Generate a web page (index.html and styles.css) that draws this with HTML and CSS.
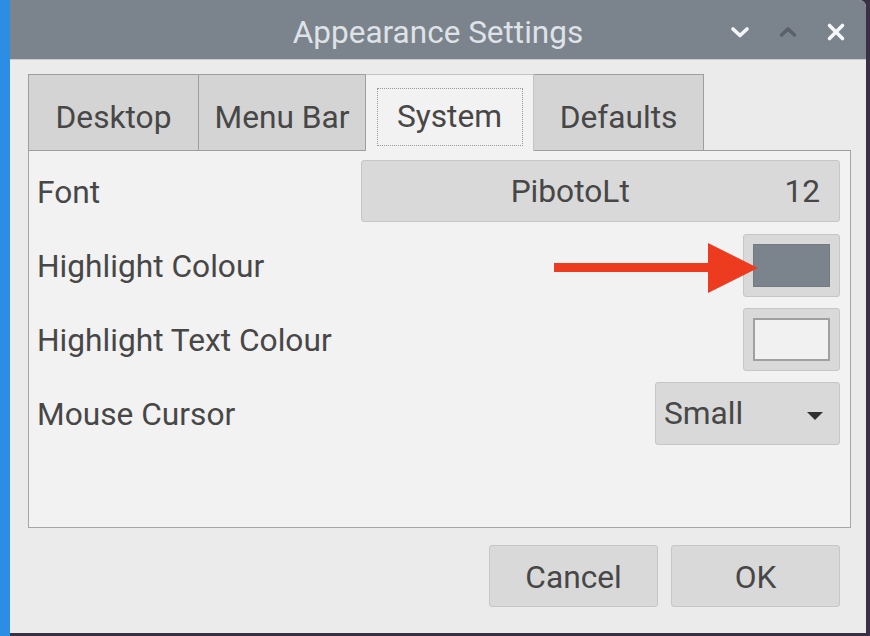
FILE: index.html
```html
<!DOCTYPE html>
<html>
<head>
<meta charset="utf-8">
<link rel="stylesheet" href="styles.css">
</head>
<body>
<div class="window">
  <div class="titlebar">
    <div></div>
    <div class="title">Appearance Settings</div>
    <div class="wm-buttons">
      <svg class="wm-icon" viewBox="0 0 20 20"><path d="M3 7 L10 13.5 L17 7" fill="none" stroke="#f4f5f6" stroke-width="3.6" stroke-linecap="round" stroke-linejoin="round"/></svg>
      <svg class="wm-icon" viewBox="0 0 20 20"><path d="M3.5 13 L10 7 L16.5 13" fill="none" stroke="#5b6168" stroke-width="3.6" stroke-linecap="round" stroke-linejoin="round"/></svg>
      <svg class="wm-icon" viewBox="0 0 20 20"><path d="M3.5 3.5 L16.5 16.5 M16.5 3.5 L3.5 16.5" fill="none" stroke="#f6f7f8" stroke-width="3.6" stroke-linecap="round"/></svg>
    </div>
  </div>
  <div class="content">
    <div class="tabs">
      <div class="tab tab-desktop">Desktop</div>
      <div class="tab tab-menubar">Menu Bar</div>
      <div class="tab tab-active"><span class="focus">System</span></div>
      <div class="tab tab-defaults">Defaults</div>
    </div>
    <div class="panel">
      <div class="row">
        <span class="label">Font</span>
        <div class="btn font-btn"><span class="font-name">PibotoLt</span><span class="font-size">12</span></div>
      </div>
      <div class="row">
        <span class="label">Highlight Colour</span>
        <div class="btn colour-btn"><span class="swatch swatch-dark"></span></div>
      </div>
      <div class="row">
        <span class="label">Highlight Text Colour</span>
        <div class="btn colour-btn"><span class="swatch swatch-light"></span></div>
      </div>
      <div class="row">
        <span class="label">Mouse Cursor</span>
        <div class="btn combo"><span>Small</span><span class="caret"></span></div>
      </div>
    </div>
    <div class="actions">
      <div class="btn action">Cancel</div>
      <div class="btn action">OK</div>
    </div>
  </div>
  <svg class="arrow" width="210" height="52" viewBox="0 0 210 52"><rect x="0" y="20" width="160" height="9" fill="#ec3b1f"/><polygon points="154,0 204,25 154,50" fill="#ec3b1f"/></svg>
</div>
</body>
</html>
```
FILE: styles.css
```css
html, body {
  margin: 0;
  padding: 0;
}
body {
  width: 870px;
  height: 636px;
  overflow: hidden;
  background: linear-gradient(to right, #2b8de4 0, #2b8de4 10px, #3a2f44 10px);
  font-family: Roboto, "Noto Sans", sans-serif;
  color: #474747;
}
.window {
  position: relative;
  margin-left: 10px;
  width: 856px;
  height: 633px;
  background: #ebebeb;
  border-radius: 0 7px 0 0;
  overflow: hidden;
}
.titlebar {
  height: 59px;
  background: #7b838c;
  display: grid;
  grid-template-columns: 1fr auto 1fr;
  align-items: center;
  border-bottom: 1px solid #c9ccd0;
}
.title {
  color: #dfe2e6;
  font-size: 31.5px;
  padding-top: 5px;
}
.wm-buttons {
  display: flex;
  justify-content: flex-end;
  align-items: center;
  gap: 28px;
  padding-right: 20px;
  padding-top: 4px;
}
.wm-icon {
  width: 20px;
  height: 20px;
}
.content {
  padding: 14px 15px 0 18px;
}
.tabs {
  display: flex;
  height: 76px;
}
.tab {
  box-sizing: border-box;
  height: 76px;
  background: #d4d4d4;
  border: 1px solid #9e9e9e;
  border-bottom: none;
  display: flex;
  align-items: center;
  justify-content: center;
  font-size: 31.7px;
  padding-top: 9px;
}
.tab + .tab {
  margin-left: -1px;
}
.tab-desktop { width: 171px; }
.tab-menubar { width: 168px; }
.tab-defaults { width: 171px; }
.tab-active {
  width: 169px;
  height: 77px;
  background: #f2f2f2;
  position: relative;
  z-index: 1;
  border-color: #c4c4c4;
  border-left-color: #9e9e9e;
  padding-top: 0;
  align-items: flex-start;
}
.focus {
  box-sizing: border-box;
  margin-top: 13px;
  width: 146px;
  height: 58px;
  border: 1px dotted #9a9a9a;
  display: flex;
  align-items: center;
  justify-content: center;
  padding-bottom: 2px;
}
.panel {
  box-sizing: border-box;
  width: 823px;
  height: 378px;
  margin-top: 0;
  background: #f2f2f2;
  border: 1px solid #a6a6a6;
  border-top-color: #9e9e9e;
  padding: 9px 10px 0 8px;
  display: flex;
  flex-direction: column;
  gap: 12px;
}
.row {
  display: flex;
  align-items: center;
  height: 62px;
}
.label {
  font-size: 31.7px;
  padding-top: 2px;
}
.btn {
  box-sizing: border-box;
  background: #d9d9d9;
  border: 1px solid #c6c6c6;
  border-radius: 3px;
  font-size: 31.7px;
  display: flex;
  align-items: center;
}
.font-btn {
  margin-left: auto;
  width: 479px;
  height: 62px;
  padding-right: 19px;
}
.font-name {
  flex: 1;
  text-align: center;
  padding-right: 6px;
}
.colour-btn {
  margin-left: auto;
  width: 97px;
  height: 63px;
  justify-content: center;
}
.swatch {
  box-sizing: border-box;
  display: block;
  width: 77px;
  height: 43px;
}
.swatch-dark {
  background: #7b838c;
  border: 1px solid #727a82;
}
.swatch-light {
  background: #f1f1f1;
  border: 2px solid #a0a0a0;
}
.combo {
  margin-left: auto;
  width: 185px;
  height: 63px;
  padding: 0 16px 0 8px;
  justify-content: space-between;
}
.caret {
  width: 0;
  height: 0;
  border-left: 8px solid transparent;
  border-right: 8px solid transparent;
  border-top: 8px solid #2f2f2f;
  margin-top: 6px;
}
.actions {
  display: flex;
  justify-content: flex-end;
  gap: 13px;
  margin-top: 17px;
  padding-right: 11px;
}
.action {
  width: 169px;
  height: 62px;
  justify-content: center;
  padding-top: 2px;
}
.arrow {
  position: absolute;
  left: 544px;
  top: 243px;
}
```
